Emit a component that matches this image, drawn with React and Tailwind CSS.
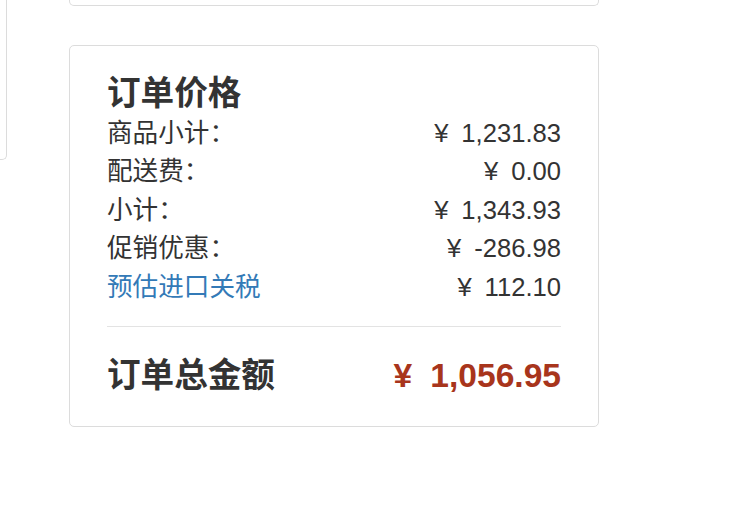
import React from 'react';

const OrderSummary = () => {
  const rows = [
    { label: '商品小计：', value: '1,231.83' },
    { label: '配送费：', value: '0.00' },
    { label: '小计：', value: '1,343.93' },
    { label: '促销优惠：', value: '-286.98' },
    { label: '预估进口关税', value: '112.10', link: true },
  ];

  return (
    <div
      className="min-h-screen bg-white text-[#333]"
      style={{ fontFamily: '"Liberation Sans", Arial, "Noto Sans CJK SC", sans-serif' }}
    >
      <div className="flex items-start">
        {/* side panel edge */}
        <div className="w-[7px] h-[160px] border-r border-b border-[#dcdcdc] rounded-br-[5px]"></div>

        <div className="ml-[62px] w-[530px]">
          {/* previous card */}
          <div className="h-[6px] border-x border-b border-[#dcdcdc] rounded-b-[5px]"></div>

          {/* price card */}
          <div className="mt-[39px] border border-[#dcdcdc] rounded-[5px] px-[37px] pt-[29px] pb-[26px]">
            <h3 className="text-[33.6px] leading-[38px] font-bold mb-[1px]">订单价格</h3>
            <div>
              {rows.map((row, i) => (
                <div key={i} className="flex justify-between items-center text-[25.6px] leading-[38.4px]">
                  <span className={row.link ? 'text-[#337ab7]' : ''}>{row.label}</span>
                  <span>
                    <span className="mr-[13px]">¥</span>
                    {row.value}
                  </span>
                </div>
              ))}
            </div>
            <div className="mt-[20px] border-t border-[#e3e3e3]"></div>
            <div className="flex justify-between items-center h-[48px] mt-[25px] text-[33.6px] font-bold">
              <span>订单总金额</span>
              <span className="text-[#a8351c]">
                <span className="mr-[18px]">¥</span>
                1,056.95
              </span>
            </div>
          </div>
        </div>
      </div>
    </div>
  );
};

export default function App() {
  return <OrderSummary />;
}
